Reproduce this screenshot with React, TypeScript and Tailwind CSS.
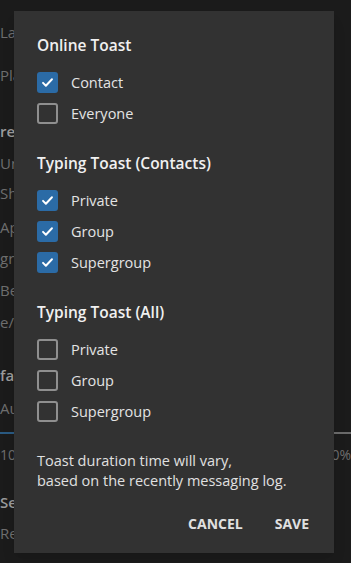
import React from "react";

type Row = { label: string; checked: boolean };

const sections: { title: string; rows: Row[] }[] = [
  {
    title: "Online Toast",
    rows: [
      { label: "Contact", checked: true },
      { label: "Everyone", checked: false },
    ],
  },
  {
    title: "Typing Toast (Contacts)",
    rows: [
      { label: "Private", checked: true },
      { label: "Group", checked: true },
      { label: "Supergroup", checked: true },
    ],
  },
  {
    title: "Typing Toast (All)",
    rows: [
      { label: "Private", checked: false },
      { label: "Group", checked: false },
      { label: "Supergroup", checked: false },
    ],
  },
];

function Checkbox({ checked }: { checked: boolean }) {
  if (checked) {
    return (
      <span className="flex h-[21px] w-[21px] items-center justify-center rounded-[3px] bg-[#2b6ba6]">
        <svg width="13" height="13" viewBox="0 0 16 16" fill="none">
          <path d="M2.5 8.5l3.5 3.5 7.5-8" stroke="#fff" strokeWidth="2.4" strokeLinecap="round" strokeLinejoin="round" />
        </svg>
      </span>
    );
  }
  return <span className="h-[21px] w-[21px] rounded-[3px] border-2 border-[#8f8f8f]" />;
}

function Background() {
  return (
    <div className="flex flex-col text-[15px] leading-5 text-[#6e6e6e]">
      <div className="mt-[22px] h-5">Launch at startup</div>
      <div className="mt-[23px] h-5">Play sound</div>
      <div className="mt-[36px] h-5 font-semibold text-[#9a9a9a]">re</div>
      <div className="mt-[12px] h-5">Unread count</div>
      <div className="mt-[10px] h-5">Show preview</div>
      <div className="mt-[14px] h-5">Apply theme</div>
      <div className="mt-[11px] h-5">gradient</div>
      <div className="mt-[12px] h-5">Bell sound</div>
      <div className="mt-[12px] h-5">e/night</div>
      <div className="mt-[33px] h-5 font-semibold text-[#9a9a9a]">face</div>
      <div className="mt-[13px] h-5">Auto scale</div>
      <div className="mt-[14px] flex h-[2px]">
        <div className="w-[180px] bg-[#2a5a82]" />
        <div className="flex-1 bg-[#6a6a6a]" />
      </div>
      <div className="mt-[11px] flex h-5 justify-between text-[14px]">
        <span>100%</span>
        <span>200%</span>
      </div>
      <div className="mt-[27px] h-5 font-semibold text-[#9a9a9a]">Security</div>
      <div className="mt-[11px] h-5">Remember me</div>
    </div>
  );
}

export default function App() {
  return (
    <div className="relative h-[563px] w-[351px] overflow-hidden bg-[#1b1b1b] font-['Open_Sans',sans-serif]">
      <Background />

      {/* Dialog */}
      <div className="absolute left-[14px] top-[11px] flex h-[542px] w-[320px] flex-col bg-[#323232] pl-[23px] pr-[17px] pt-[23px] text-[#e4e4e4] shadow-lg">
        {sections.map((s, i) => (
          <section key={s.title} className={i === 0 ? "" : "mt-[23px]"}>
            <h3 className="h-[22px] text-[15.5px] font-semibold leading-[22px] text-[#f0f0f0]">{s.title}</h3>
            <div className="mt-[11px]">
              {s.rows.map((r) => (
                <div key={r.label} className="flex h-[31px] items-center gap-[13px]">
                  <Checkbox checked={r.checked} />
                  <span className="text-[14.5px]">{r.label}</span>
                </div>
              ))}
            </div>
          </section>
        ))}

        <p className="mt-[24px] text-[14.5px] leading-5 text-[#e0e0e0]">
          Toast duration time will vary,
          <br />
          based on the recently messaging log.
        </p>

        <div className="mt-[14px] flex justify-end gap-4">
          <button className="h-9 px-2 text-[14px] font-bold text-[#e0e0e0]">CANCEL</button>
          <button className="h-9 px-2 text-[14px] font-bold text-[#e0e0e0]">SAVE</button>
        </div>
      </div>
    </div>
  );
}
